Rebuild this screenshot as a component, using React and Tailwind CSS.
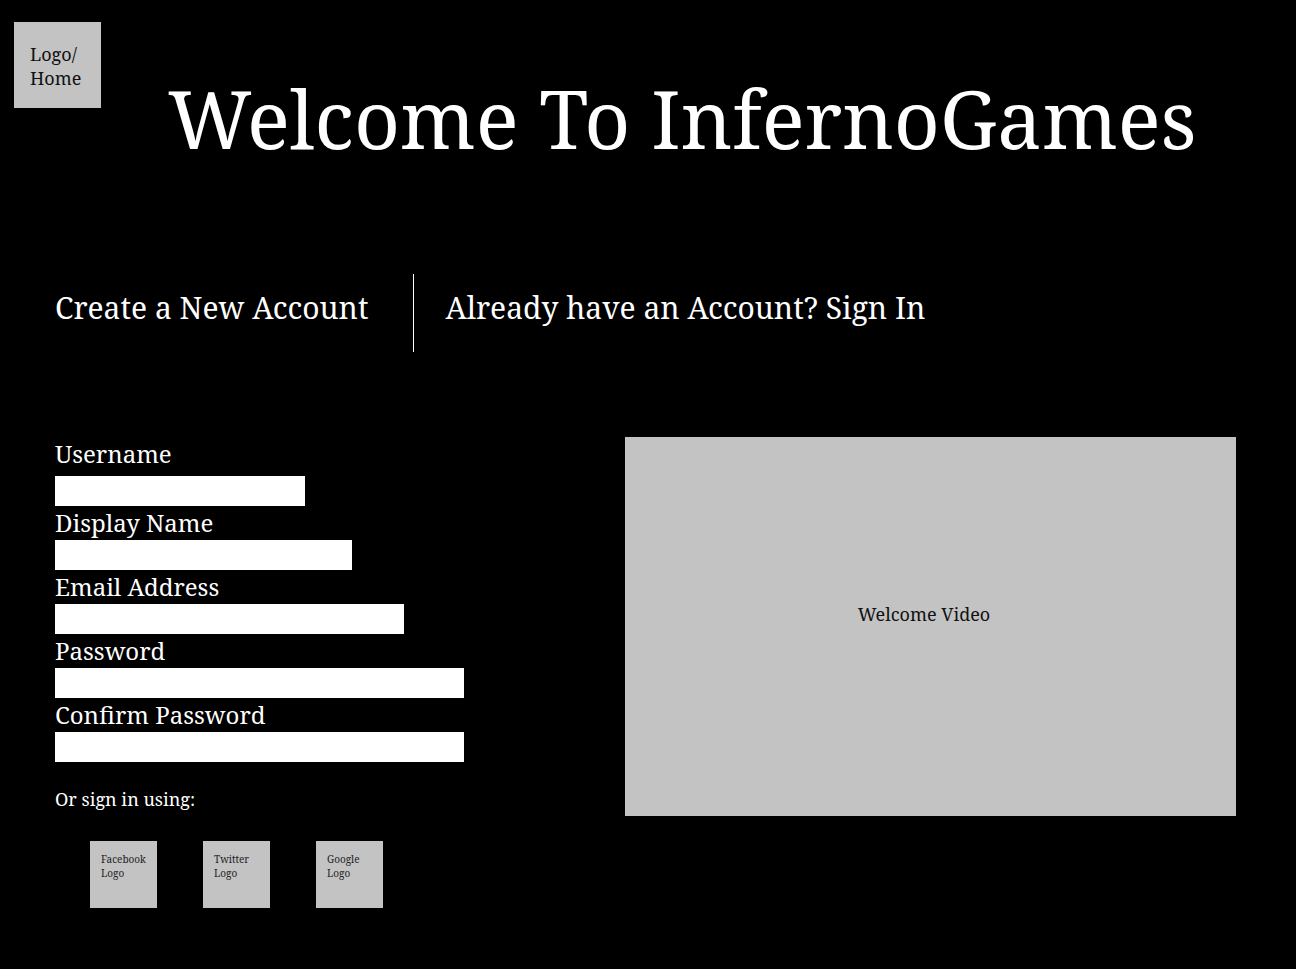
const SERIF = "font-['Noto_Serif','DejaVu_Serif',serif]"

function Field({ label, width, first }) {
  return (
    <div className="flex flex-col">
      <label className={`text-[24px] leading-[34px] text-white ${first ? 'mb-[5px]' : ''}`}>{label}</label>
      <input type="text" className="h-[30px] bg-white outline-none" style={{ width }} />
    </div>
  )
}

function SocialBox({ name }) {
  return (
    <div className="w-[67px] h-[67px] bg-[#c3c3c3] pl-[11px] pt-[11px] text-[10px] leading-[14px] text-[#222]">
      {name}<br />Logo
    </div>
  )
}

export default function App() {
  return (
    <div className={`min-h-screen bg-black text-white ${SERIF}`}>
      <header className="flex items-start pt-[22px] pl-[14px]">
        <div className="w-[87px] h-[86px] bg-[#c3c3c3] text-[#111] text-[18px] leading-[24px] pl-[16px] pt-[20px]">
          Logo/<br />Home
        </div>
        <h1 className="ml-[67px] mt-[48px] text-[80px] leading-[96px] whitespace-nowrap">Welcome To InfernoGames</h1>
      </header>

      <nav className="flex items-center mt-[108px] pl-[55px] h-[78px]">
        <span className="text-[30px] pb-[12px]">Create a New Account</span>
        <div className="ml-[44px] mr-[32px] w-px h-[78px] bg-white" />
        <span className="text-[30px] pb-[12px]">Already have an Account? Sign In</span>
      </nav>

      <main className="flex mt-[85px] pl-[55px]">
        <form className="w-[570px] flex flex-col">
          <Field label="Username" width={250} first />
          <Field label="Display Name" width={297} />
          <Field label="Email Address" width={349} />
          <Field label="Password" width={409} />
          <Field label="Confirm Password" width={409} />
          <p className="mt-[25px] text-[18px] leading-[24px]">Or sign in using:</p>
          <div className="flex gap-[46px] pl-[35px] mt-[30px]">
            <SocialBox name="Facebook" />
            <SocialBox name="Twitter" />
            <SocialBox name="Google" />
          </div>
        </form>
        <div className="w-[611px] h-[379px] bg-[#c3c3c3] flex items-center justify-center text-[#111] text-[18px] pb-[24px] pr-[13px]">
          Welcome Video
        </div>
      </main>
    </div>
  )
}
